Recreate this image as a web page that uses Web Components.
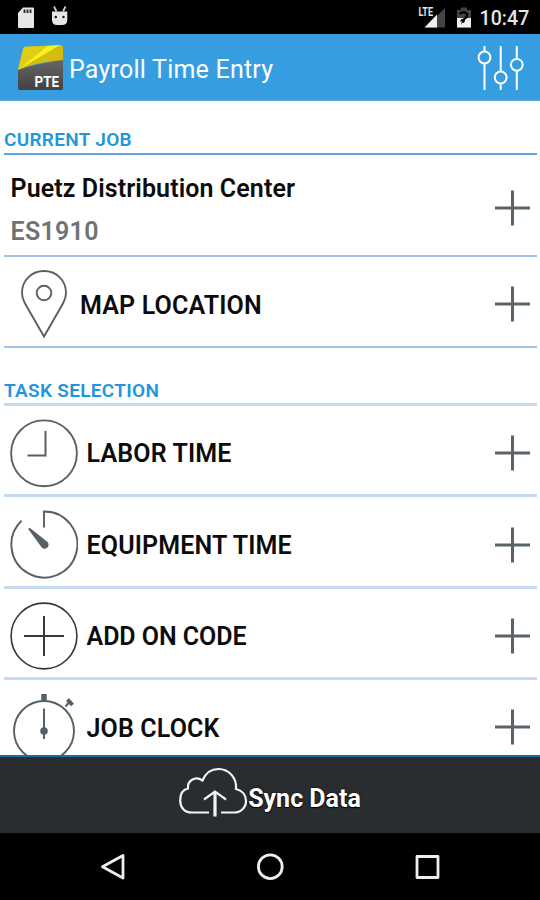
<!DOCTYPE html>
<html lang="en">
<head>
<meta charset="utf-8">
<title>Payroll Time Entry</title>
<style>
    body {
        margin: 0;
        background: #fff;
        font-family: Roboto, "Liberation Sans", sans-serif;
    }
</style>
</head>
<body>
<pte-app></pte-app>

<script>
const ICONS = {
    pin: `<path d="M34 68.500 L15 35.500 C12.800 31.500 12 28 12 25 C12 12 22 3 34 3 S56 12 56 25 C56 28 55.200 31.500 53 35.500 Z"/><circle cx="34" cy="25" r="7.300"/>`,
    clock: `<circle cx="34" cy="36.300" r="32.900"/><path d="M35.500 14 V38.500 H17.500" stroke-width="2"/>`,
    timer: `<path d="M34 19.500 V3.500 A33 33 0 1 1 11.500 12.700"/><path d="M18.200 21 L19.600 19.800 L36.600 33.300 A4 4 0 1 1 31 38.500 Z" fill="#566067" stroke="none"/>`,
    add: `<g stroke="#33383b"><circle cx="34" cy="36" r="32.900" stroke-width="1.600"/><path d="M34 16 V56 M14 36 H54" stroke-width="2"/></g>`,
    stopwatch: `<circle cx="34" cy="40" r="30"/><path d="M34 3 V10" stroke-width="5.500"/><path d="M34 17.500 V48" stroke-width="2"/><circle cx="34" cy="40" r="3.800" fill="#566067" stroke="none"/><path d="M55.500 15.500 L59 11.500" stroke-width="2"/><path d="M57.500 8.500 L62.500 14" stroke-width="4"/>`
};

class StatusBar extends HTMLElement {
    connectedCallback() {
        this.attachShadow({ mode: 'open' });
        this.shadowRoot.innerHTML = `
            <style>
                :host {
                    display: flex;
                    justify-content: space-between;
                    height: 34px;
                    background: #000;
                    color: #e6e6e6;
                }
                .side { display: flex; }
                svg { display: block; }
                .lte { font-size: 12px; font-weight: 700; fill: #e6e6e6; }
                .time {
                    width: 60.5px;
                    font-size: 19.5px;
                    font-weight: 500;
                    line-height: 37px;
                    letter-spacing: 0.1px;
                }
            </style>
            <svg width="80" height="34">
                <path d="M23 7.500 H33 Q34 7.500 34 8.500 V27 Q34 28 33 28 H19 Q18 28 18 27 V13 Z" fill="#e6e6e6"/>
                <path d="M24.500 9.500 V13 M27.500 9.500 V13 M30.500 9.500 V13" stroke="#222" stroke-width="1.800"/>
                <path d="M52 11.500 H67.300 V20 Q67.300 25 62 25 H57 Q52 25 52 20 Z" fill="#e6e6e6"/>
                <path d="M54 6.500 L56.500 11.500 M65.500 6.500 L63 11.500" stroke="#ccc" stroke-width="1.800"/>
                <circle cx="55.800" cy="17" r="1.200" fill="#111"/><circle cx="63.500" cy="17" r="1.200" fill="#111"/>
            </svg>
            <div class="side">
                <svg width="80" height="34">
                    <path d="M45 8 V27.500 H25 Z" fill="#444"/>
                    <path d="M37 14.500 V27.500 H24.500 Z" fill="#f0f0f0"/>
                    <text class="lte" x="18.500" y="15.500" textLength="14.500" lengthAdjust="spacingAndGlyphs" stroke="#000" stroke-width="2" paint-order="stroke">LTE</text>
                    <path d="M57 10 H61 V7.500 H67 V10 H71 V27.500 H57 Z" fill="#444"/>
                    <path d="M57 18 H71 V27.500 H57 Z" fill="#f0f0f0"/>
                    <path d="M59.500 14 Q64 10.500 67 14 Q68 17 64.500 18.500 L63 22.500" fill="none" stroke="#000" stroke-width="2.200"/>
                    <path d="M61.500 19 H65 L61 25 L62 21.500 H60 Z" fill="#000"/>
                </svg>
                <div class="time">10:47</div>
            </div>
        `;
    }
}

class AppHeader extends HTMLElement {
    connectedCallback() {
        this.attachShadow({ mode: 'open' });
        this.shadowRoot.innerHTML = `
            <style>
                :host {
                    display: flex;
                    align-items: center;
                    height: 67px;
                    box-sizing: border-box;
                    padding: 0 16px 0 17px;
                    background: #369ee0;
                    border-bottom: 1px solid #58aee5;
                    color: #fff;
                }
                svg { display: block; flex: none; }
                .badge { font-size: 15px; font-weight: 700; fill: #fff; }
                h1 {
                    flex: 1;
                    margin: 5px 0 0 5px;
                    font-size: 25px;
                    font-weight: 400;
                    line-height: 30px;
                    letter-spacing: 0.22px;
                    white-space: nowrap;
                }
            </style>
            <svg width="47" height="48">
                <defs>
                    <linearGradient id="body" x1="0" y1="0" x2="0" y2="1">
                        <stop offset="0" stop-color="#686868"/>
                        <stop offset="1" stop-color="#414141"/>
                    </linearGradient>
                </defs>
                <path d="M1 26 L46 16 V45 Q46 47 44 47 H3 Q1 47 1 45 Z" fill="url(#body)"/>
                <path d="M1 27 L6 6 Q6.500 4 8.500 3.800 L43 2 Q46 2 46 4.500 V17 Q20 19 1 27 Z" fill="#d3bd12"/>
                <path d="M1 27 L30 3 L43 2 Z" fill="#f8f320"/>
                <path d="M1 27 L6 6 Q6.500 4 8.500 3.800 L30 3 Z" fill="#e0cb17"/>
                <text class="badge" x="17.500" y="43.500" textLength="24.500" lengthAdjust="spacingAndGlyphs">PTE</text>
            </svg>
            <h1><slot></slot></h1>
            <svg width="48" height="48" fill="none" stroke="#fff" stroke-width="2">
                <path d="M8.500 3 V8 M8.500 20 V47 M24.700 3 V28 M24.700 40 V47 M40.800 3 V15 M40.800 27 V47"/>
                <circle cx="8.500" cy="14.500" r="5.900"/>
                <circle cx="24.700" cy="34.500" r="5.900"/>
                <circle cx="40.800" cy="21.800" r="5.900"/>
            </svg>
        `;
    }
}

class SectionTitle extends HTMLElement {
    connectedCallback() {
        this.attachShadow({ mode: 'open' });
        this.shadowRoot.innerHTML = `
            <style>
                :host {
                    display: flex;
                    align-items: flex-end;
                    box-sizing: border-box;
                    height: var(--height, 54px);
                    padding-bottom: var(--gap, 1px);
                    border-bottom: var(--line, 2px solid #61a5dc);
                    color: #2196db;
                    font-size: 19px;
                    font-weight: 600;
                    line-height: 24px;
                    letter-spacing: 0.3px;
                }
            </style>
            <slot></slot>
        `;
    }
}

class MenuRow extends HTMLElement {
    connectedCallback() {
        const icon = this.getAttribute('icon');
        this.attachShadow({ mode: 'open' });
        this.shadowRoot.innerHTML = `
            <style>
                :host {
                    display: flex;
                    align-items: flex-start;
                    box-sizing: border-box;
                    flex: none;
                    height: var(--height, 91px);
                    padding: 11px 7px 0 6px;
                    border-bottom: var(--line, 3px solid #c5d9f1);
                    color: #0c0c0c;
                    font-size: 25px;
                    font-weight: 600;
                    line-height: 30px;
                    white-space: nowrap;
                }
                svg { display: block; flex: none; }
                .icon { width: 68px; height: 72px; }
                .label {
                    flex: 1;
                    margin: var(--label-top, 22px) 0 0 var(--label-gap, 8.5px);
                    letter-spacing: var(--spacing, 0.15px);
                }
                :host(:not([icon])) .label { margin: 8px 0 0 0.5px; }
                .label ::slotted(small) {
                    display: block;
                    margin-top: 13px;
                    color: #6f7274;
                    font-size: 25px;
                    letter-spacing: 0.3px;
                }
                .plus { margin-top: var(--plus-top, 18px); }
            </style>
            ${icon ? `<svg class="icon" fill="none" stroke="#566067" stroke-width="1.900">${ICONS[icon]}</svg>` : ''}
            <div class="label"><slot></slot></div>
            <svg class="plus" width="36" height="36" stroke="#5a6468" stroke-width="3">
                <path d="M18.500 0.500 V35.500 M1 18 H36"/>
            </svg>
        `;
    }
}

class SyncButton extends HTMLElement {
    connectedCallback() {
        this.attachShadow({ mode: 'open' });
        this.shadowRoot.innerHTML = `
            <style>
                :host {
                    display: flex;
                    justify-content: center;
                    box-sizing: border-box;
                    height: 78px;
                    padding-top: 10px;
                    border-top: 2px solid #1670a6;
                    background: #292d2f;
                    color: #fff;
                    font-size: 25px;
                    font-weight: 700;
                    line-height: 30px;
                }
                svg { display: block; }
                span { margin-top: 17px; text-shadow: 0 0 2px #000, 0 1px 1px #000; }
            </style>
            <svg width="69" height="52" fill="none" stroke="#f4f4f4" stroke-width="2.200">
                <path d="M30 45.500 H13 C5 45.500 1.200 40 1.200 33.500 C1.200 27 4 22.500 9 21.500 C8 14 16 8.500 23.500 13.500 C27 5 33 2 39.500 2 C50 2 58 11 57 22 C63 23.500 67 28 67 34 C67 40.500 62 45.500 55 45.500 H42"/>
                <path d="M36 49.500 V25" stroke-width="3.200"/>
                <path d="M25 32.500 L36 24.500 L47 32.500"/>
            </svg>
            <span><slot></slot></span>
        `;
    }
}

class NavBar extends HTMLElement {
    connectedCallback() {
        this.attachShadow({ mode: 'open' });
        this.shadowRoot.innerHTML = `
            <style>
                :host {
                    display: flex;
                    justify-content: space-between;
                    align-items: center;
                    height: 67px;
                    box-sizing: border-box;
                    padding: 0 98px;
                    background: #000;
                }
            </style>
            <svg width="30" height="30" fill="none" stroke="#eee" stroke-width="2.800" stroke-linejoin="round"><path d="M25 3.500 V26 L4.500 14.800 Z"/></svg>
            <svg width="30" height="30" fill="none" stroke="#eee" stroke-width="2.800"><circle cx="15.300" cy="14.700" r="11.900"/></svg>
            <svg width="30" height="30" fill="none" stroke="#eee" stroke-width="2.800" stroke-linejoin="round"><path d="M5 4.500 H26 V25.500 H5 Z"/></svg>
        `;
    }
}

class PteApp extends HTMLElement {
    connectedCallback() {
        this.attachShadow({ mode: 'open' });
        this.shadowRoot.innerHTML = `
            <style>
                :host {
                    display: flex;
                    flex-direction: column;
                    height: 900px;
                    overflow: hidden;
                }
                main {
                    display: flex;
                    flex-direction: column;
                    flex: 1;
                    min-height: 0;
                    overflow: hidden;
                    padding: 0 3px 0 4px;
                }
                section-title, menu-row { flex: none; }
                .job { --height: 102px; --line: 2px solid #a3c4e8; --plus-top: 24px; --spacing: 0.1px; }
                .map { --line: 2px solid #a3c4e8; --label-gap: 2px; --label-top: 23px; --plus-top: 17.5px; }
                .tasks { --height: 58px; --gap: 0; --line: 3px solid #c5d9f1; }
                .equipment { --height: 92px; --label-top: 23px; --plus-top: 18.5px; }
                .add { --spacing: -0.05px; }
                .equipment, .clock { --label-top: 23px; }
            </style>
            <status-bar></status-bar>
            <app-header>Payroll Time Entry</app-header>
            <main>
                <section-title>CURRENT JOB</section-title>
                <menu-row class="job">Puetz Distribution Center<small>ES1910</small></menu-row>
                <menu-row class="map" icon="pin">MAP LOCATION</menu-row>
                <section-title class="tasks">TASK SELECTION</section-title>
                <menu-row icon="clock">LABOR TIME</menu-row>
                <menu-row class="equipment" icon="timer">EQUIPMENT TIME</menu-row>
                <menu-row class="add" icon="add">ADD ON CODE</menu-row>
                <menu-row class="clock" icon="stopwatch">JOB CLOCK</menu-row>
            </main>
            <sync-button>Sync Data</sync-button>
            <nav-bar></nav-bar>
        `;
    }
}

customElements.define('status-bar', StatusBar);
customElements.define('app-header', AppHeader);
customElements.define('section-title', SectionTitle);
customElements.define('menu-row', MenuRow);
customElements.define('sync-button', SyncButton);
customElements.define('nav-bar', NavBar);
customElements.define('pte-app', PteApp);
</script>
</body>
</html>
